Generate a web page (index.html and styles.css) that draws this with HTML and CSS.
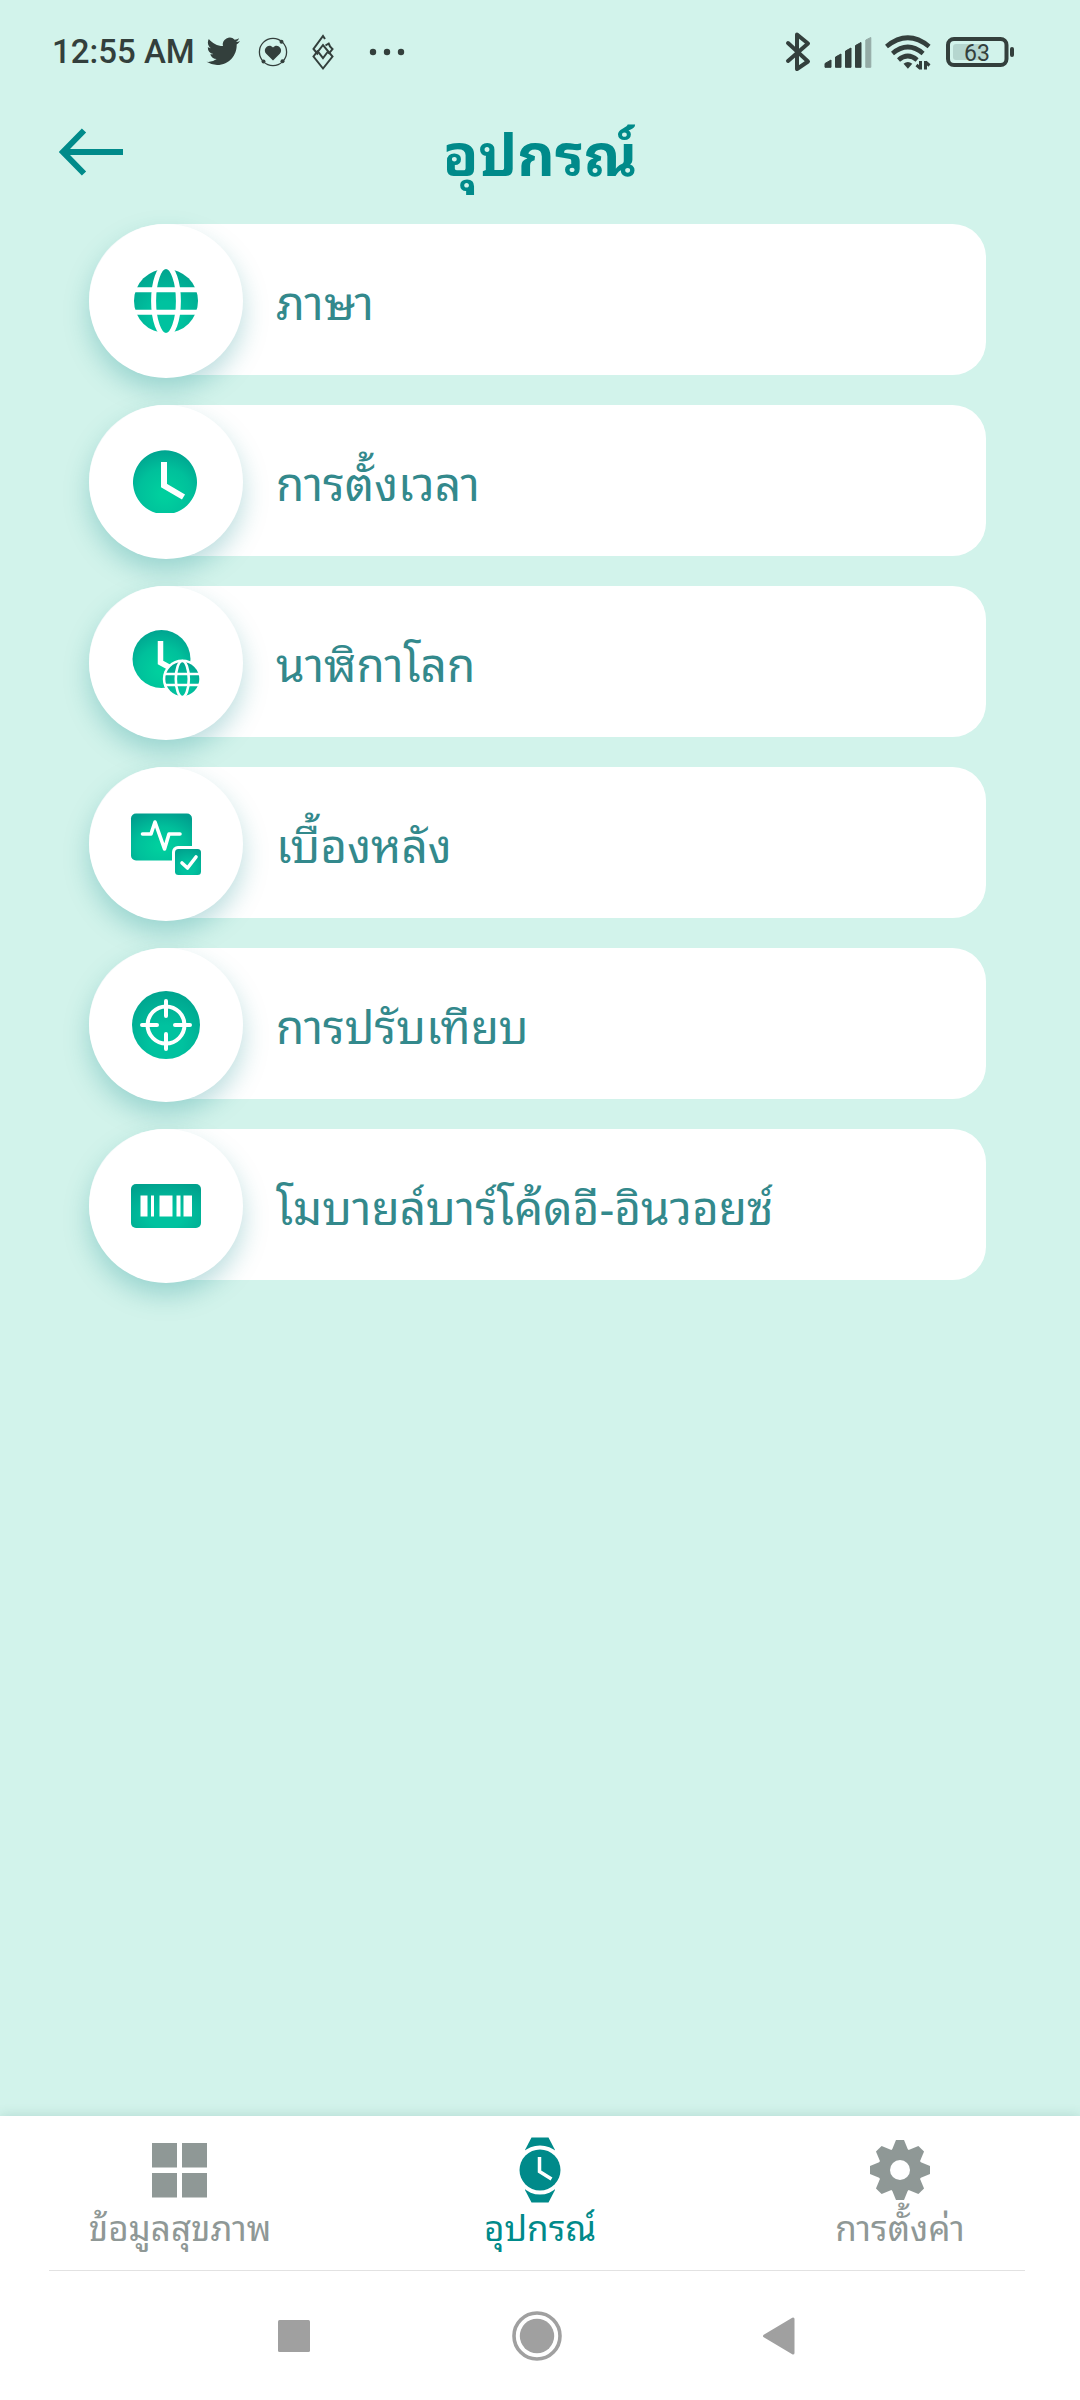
FILE: index.html
```html
<!DOCTYPE html>
<html lang="th">
<head>
<meta charset="utf-8">
<meta name="viewport" content="width=device-width, initial-scale=1">
<title>อุปกรณ์</title>
<link rel="stylesheet" href="styles.css">
</head>
<body>
<div class="status">
  <span class="time">12:55 AM</span>
  <svg class="notices" width="200" height="40" viewBox="205 32 200 40" aria-hidden="true">
    <path transform="translate(206.500 34.500) scale(1.400)" d="M23.950 4.570a10 10 0 0 1-2.820.77 4.960 4.960 0 0 0 2.160-2.720c-.95.55-2 .95-3.130 1.190a4.920 4.920 0 0 0-8.380 4.480C7.690 8.100 4.070 6.130 1.640 3.160a4.820 4.820 0 0 0-.67 2.480c0 1.710.87 3.210 2.190 4.100a4.900 4.900 0 0 1-2.230-.62v.06a4.920 4.920 0 0 0 3.950 4.830 4.990 4.990 0 0 1-2.210.08 4.940 4.940 0 0 0 4.600 3.420A9.870 9.870 0 0 1 0 19.540a13.990 13.990 0 0 0 7.550 2.210c9.050 0 14-7.500 14-13.980 0-.21 0-.42-.02-.63a9.940 9.940 0 0 0 2.420-2.570z"/>
    <circle cx="273" cy="52" r="13.600" fill="none" stroke="#333f3c" stroke-width="1.300"/>
    <circle cx="281.500" cy="41.700" r="2"/><circle cx="263.500" cy="61.500" r="2"/><circle cx="282.500" cy="61.200" r="2"/>
    <path d="M273 60.500l-6.800-6.800c-4.200-4.500 2.500-11.200 6.800-6.200 4.300-5 11 1.700 6.800 6.200z"/>
    <g fill="none" stroke="#333f3c" stroke-width="2">
      <path d="M325 39l-2-3-9.500 13 4.500 5.500M325.500 45.500l4-2.500M328.500 43l1.500 3.500 2.500 2.500-4 5"/>
      <path d="M318 50.500l-4.500 6L323 68.500l9.500-12-9.500-11.500-5 6.500 5 6.500 5-6.500"/>
    </g>
    <circle cx="373" cy="52" r="3.200"/><circle cx="387" cy="52" r="3.200"/><circle cx="401" cy="52" r="3.200"/>
  </svg>
  <svg class="signals" width="232" height="44" viewBox="784 30 232 44" role="img" aria-label="63%">
    <path d="M788 43l20 18.500-11 7.500V34.500L808 43.500l-20 17.500" fill="none" stroke="#333f3c" stroke-width="4" stroke-linecap="round" stroke-linejoin="round"/>
    <path d="M825 63.500l6-3.500V67.300h-6zM835.500 57l5.500-3V67.300h-5.500zM845.500 51l5.500-3V67.300h-5.500zM855.500 45.500l5.500-3V67.300h-5.500z" stroke="#333f3c" stroke-linejoin="round"/>
    <path d="M865.800 40l5-2.500V67.300h-5z" fill="#94aba6" stroke="#94aba6" stroke-linejoin="round"/>
    <g fill="none" stroke="#333f3c" stroke-width="4.600">
      <path d="M886.500 46.500q21.300-17.500 42.600 0"/><path d="M892.500 53.500q15.300-13 30.600 0"/><path d="M898.500 60q9.300-8 18.600 0"/>
    </g>
    <path d="M903.500 63.800q4.300-3.500 8.800 0l-4.400 5z"/>
    <path d="M920.500 61v8.500m0-1l-4-3.500M925.500 69.500v-8.500m0 1l4 3.500" fill="none" stroke="#333f3c" stroke-width="3"/>
    <rect x="953" y="44" width="33" height="16" rx="3" fill="#b5d6cf"/>
    <rect x="948" y="39" width="58.500" height="26" rx="6" fill="none" stroke="#333f3c" stroke-width="4"/>
    <rect x="1010" y="47" width="4" height="10" rx="2"/>
    <text x="977" y="60.500" text-anchor="middle" class="charge">63</text>
  </svg>
</div>

<header class="header">
  <button class="back" type="button" aria-label="ย้อนกลับ">
    <svg width="64" height="48" viewBox="0 0 64 48" aria-hidden="true"><path d="M25 2.500L4 24l21 21.500M4 24h60" fill="none" stroke="#008a8a" stroke-width="6"/></svg>
  </button>
  <h1 class="title">อุปกรณ์</h1>
</header>

<main class="content">
  <nav class="menu">
    <a class="item" href="#language">
      <span class="badge"><svg width="80" height="80" viewBox="0 0 80 80" aria-hidden="true">
        <defs>
          <radialGradient id="g" cx=".5" cy=".7" r=".75"><stop offset=".1" stop-color="#00cf9e"/><stop offset=".55" stop-color="#00c09b"/><stop offset="1" stop-color="#009f8e"/></radialGradient>
          <radialGradient id="d" cx=".5" cy=".75" r=".8"><stop offset=".3" stop-color="#00c29f"/><stop offset="1" stop-color="#00a18d"/></radialGradient>
        </defs>
        <circle cx="40" cy="40" r="32" fill="url(#d)"/>
        <g fill="none" stroke="#fff" stroke-width="5"><path d="M6 28.800h68M6 51.200h68"/><ellipse cx="40" cy="40" rx="12.400" ry="34.500"/></g>
      </svg></span>
      <span class="label">ภาษา</span>
    </a>
    <a class="item" href="#time">
      <span class="badge"><svg width="80" height="80" viewBox="0 0 80 80" aria-hidden="true">
        <path d="M30 71a32 32 0 1 1 18 0z" fill="url(#g)"/>
        <path d="M38 20v23.500L57.500 55" fill="none" stroke="#fff" stroke-width="6"/>
      </svg></span>
      <span class="label">การตั้งเวลา</span>
    </a>
    <a class="item" href="#world-clock">
      <span class="badge"><svg width="80" height="80" viewBox="0 0 80 80" aria-hidden="true">
        <circle cx="35.500" cy="36" r="29" fill="url(#g)"/>
        <path d="M34.500 18v21.500L50 48" fill="none" stroke="#fff" stroke-width="5.500"/>
        <circle cx="56.300" cy="56" r="19.500" fill="#fff"/><circle cx="56.300" cy="56" r="17" fill="url(#d)"/>
        <g fill="none" stroke="#fff" stroke-width="2.600"><path d="M38 51h37M38 62h37"/><ellipse cx="56.300" cy="56" rx="6.500" ry="18"/></g>
      </svg></span>
      <span class="label">นาฬิกาโลก</span>
    </a>
    <a class="item" href="#background">
      <span class="badge"><svg width="80" height="80" viewBox="0 0 80 80" aria-hidden="true">
        <rect x="5" y="9.500" width="61" height="47" rx="5" fill="url(#g)"/>
        <path d="M16.500 30H25l4-12 9.500 27L43 30h11" fill="none" stroke="#fff" stroke-width="3.600" stroke-linecap="round" stroke-linejoin="round"/>
        <rect x="46" y="42" width="32" height="32" rx="6" fill="#fff"/><rect x="49" y="45" width="26" height="26" rx="3.500" fill="url(#d)"/>
        <path d="M56 59l5.500 5L70 53" fill="none" stroke="#fff" stroke-width="3.600" stroke-linecap="round" stroke-linejoin="round"/>
      </svg></span>
      <span class="label">เบื้องหลัง</span>
    </a>
    <a class="item" href="#calibration">
      <span class="badge"><svg width="80" height="80" viewBox="0 0 80 80" aria-hidden="true">
        <circle cx="40" cy="40" r="34" fill="url(#d)"/>
        <g fill="none" stroke="#fff" stroke-width="4" stroke-linecap="round"><circle cx="40" cy="40" r="18.500"/><path d="M16 40h15M49 40h15M40 16v15M40 49v15"/></g>
      </svg></span>
      <span class="label">การปรับเทียบ</span>
    </a>
    <a class="item" href="#barcode">
      <span class="badge"><svg width="80" height="80" viewBox="0 0 80 80" aria-hidden="true">
        <rect x="5" y="18" width="70" height="44" rx="5" fill="url(#d)"/>
        <path d="M14.500 29.500h7v21h-7zM25 29.500h3v21h-3zM33.500 29.500h13v21h-13zM50.500 29.500h4v21h-4zM57.500 29.500h8.500v21h-8.500z" fill="#fff"/>
      </svg></span>
      <span class="label">โมบายล์บาร์โค้ดอี-อินวอยซ์</span>
    </a>
  </nav>
</main>

<footer class="bottom">
  <nav class="tabs">
    <a class="tab" href="#health">
      <svg width="64" height="68" viewBox="-32 -34 64 68" aria-hidden="true"><path d="M-28-27h25v24.500h-25zM2-27h25v24.500H2zM-28 3h25v24.500h-25zM2 3h25v24.500H2z" fill="#8f9896"/></svg>
      <span class="tab-label">ข้อมูลสุขภาพ</span>
    </a>
    <a class="tab tab-active" href="#device" aria-current="page">
      <svg width="64" height="68" viewBox="-32 -34 64 68" aria-hidden="true">
        <path d="M-8.500-32.500h17L15-20v40L8.500 32.500h-17L-15 20v-40z" fill="#008a8a"/>
        <circle r="24.500" fill="#fff"/><circle r="20.500" fill="#008a8a"/>
        <path d="M-.500-13V1.500L11.500 9" fill="none" stroke="#fff" stroke-width="3.500"/>
      </svg>
      <span class="tab-label">อุปกรณ์</span>
    </a>
    <a class="tab" href="#settings">
      <svg width="64" height="68" viewBox="-32 -34 64 68" aria-hidden="true">
        <defs><path id="t" d="M-4-30h8L8.500-19h-17z"/></defs>
        <g fill="#8f9896"><use href="#t"/><use href="#t" transform="rotate(45)"/><use href="#t" transform="rotate(90)"/><use href="#t" transform="rotate(135)"/><use href="#t" transform="rotate(180)"/><use href="#t" transform="rotate(225)"/><use href="#t" transform="rotate(270)"/><use href="#t" transform="rotate(315)"/><circle r="22"/></g>
        <circle r="10" fill="#fff"/>
      </svg>
      <span class="tab-label">การตั้งค่า</span>
    </a>
  </nav>
  <div class="system">
    <button class="key" type="button" aria-label="แอปล่าสุด"><svg width="52" height="52" viewBox="-26 -26 52 52"><rect x="-16" y="-16" width="32" height="32" rx="1.500" fill="#a0a0a0"/></svg></button>
    <button class="key" type="button" aria-label="หน้าหลัก"><svg width="52" height="52" viewBox="-26 -26 52 52"><circle r="23" fill="none" stroke="#a0a0a0" stroke-width="3.600"/><circle r="17.200" fill="#a0a0a0"/></svg></button>
    <button class="key" type="button" aria-label="กลับ"><svg width="52" height="52" viewBox="-26 -26 52 52"><path d="M-15.500 0L13-17V17z" fill="#a0a0a0" stroke="#a0a0a0" stroke-width="3" stroke-linejoin="round"/></svg></button>
  </div>
</footer>
</body>
</html>
```

FILE: styles.css
```css
* { box-sizing: border-box; }

body {
  margin: 0;
  min-height: 100vh;
  display: flex;
  flex-direction: column;
  background: #d2f3eb;
  font-family: "Noto Sans Thai Looped", Roboto, sans-serif;
}

svg { display: block; }
a { text-decoration: none; color: inherit; }
button { border: 0; padding: 0; background: none; }

.status {
  display: flex;
  align-items: center;
  height: 104px;
  padding: 0 64px 0 52px;
  color: #333f3c;
  fill: #333f3c;
}
.time {
  width: 153px;
  font: 500 33px/40px Roboto, sans-serif;
  white-space: nowrap;
}
.signals { margin-left: auto; }
.charge { font: 400 23px Roboto, sans-serif; }

.header {
  display: grid;
  grid-template-columns: 64px 1fr 64px;
  align-items: center;
  height: 95px;
  padding: 0 59px;
}
.title {
  margin: 0;
  padding-bottom: 4px;
  text-align: center;
  color: #008a8a;
  font-size: 58px;
  line-height: 80px;
  font-weight: 700;
}

.content { flex: 1; padding: 25px 94px 40px 89px; }
.menu { display: flex; flex-direction: column; gap: 30px; }
.item {
  display: flex;
  align-items: center;
  gap: 33px;
  height: 151px;
  border-radius: 77px 34px 34px 77px;
  background: #fff;
  color: #33898c;
}
.badge {
  flex: none;
  align-self: flex-start;
  display: grid;
  place-items: center;
  width: 154px;
  height: 154px;
  border-radius: 50%;
  background: #fff;
  box-shadow: 0 12px 26px rgba(0, 128, 134, .27);
}
.label {
  padding-bottom: 2px;
  font-size: 46px;
  line-height: 64px;
}

.bottom { background: #fff; box-shadow: 0 0 12px rgba(0, 80, 70, .16); }
.tabs {
  display: grid;
  grid-template-columns: repeat(3, 1fr);
  height: 154px;
  padding-top: 20px;
}
.tab {
  display: flex;
  flex-direction: column;
  align-items: center;
  color: #8f9896;
}
.tab-active { color: #008a8a; }
.tab-label { font-size: 35px; line-height: 42px; }
.system {
  display: grid;
  grid-template-columns: repeat(3, 1fr);
  justify-items: center;
  align-items: center;
  height: 130px;
  padding: 0 124px 0 123px;
  margin: 0 55px 0 49px;
  border-top: 1px solid #e2e2e2;
}
```
